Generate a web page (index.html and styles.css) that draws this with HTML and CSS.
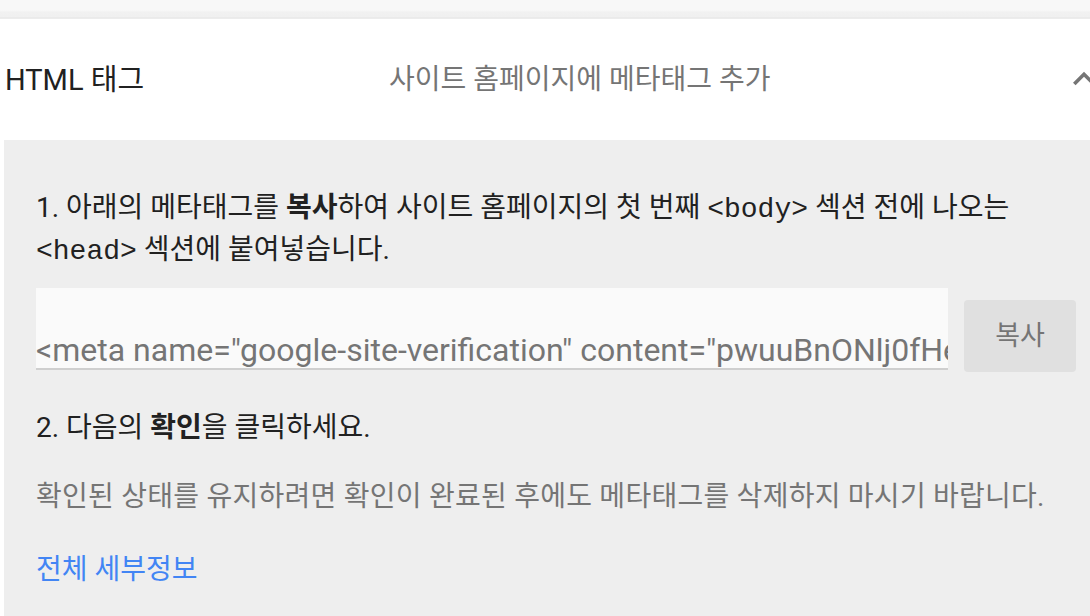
FILE: index.html
```html
<!DOCTYPE html>
<html lang="ko">
<head>
<meta charset="utf-8">
<title>HTML 태그</title>
<link rel="stylesheet" href="styles.css">
</head>
<body>
<div class="page">
  <div class="topstrip"></div>
  <div class="card">
    <div class="card-header">
      <div class="card-title">HTML 태그</div>
      <div class="card-subtitle">사이트 홈페이지에 메타태그 추가</div>
      <svg class="chevron" viewBox="0 0 24 24" width="44" height="44" aria-hidden="true"><path d="M12 8l-6 6 1.41 1.41L12 10.83l4.59 4.58L18 14z" fill="#757575"/></svg>
    </div>
    <div class="panel">
      <p class="step">1. 아래의 메타태그를 <b>복사</b>하여 사이트 홈페이지의 첫 번째 <code>&lt;body&gt;</code> 섹션 전에 나오는 <code>&lt;head&gt;</code> 섹션에 붙여넣습니다.</p>
      <div class="field-row">
        <div class="meta-field">&lt;meta name="google-site-verification" content="pwuuBnONlj0fHe3xQm7dK2vYtL9sRa1cZpW4bUoE8gN" /&gt;</div>
        <button class="copy-btn" type="button">복사</button>
      </div>
      <p class="step step2">2. 다음의 <b>확인</b>을 클릭하세요.</p>
      <p class="note">확인된 상태를 유지하려면 확인이 완료된 후에도 메타태그를 삭제하지 마시기 바랍니다.</p>
      <a class="details-link" href="#">전체 세부정보</a>
    </div>
  </div>
</div>
</body>
</html>
```

FILE: styles.css
```css
html, body {
  margin: 0;
  padding: 0;
  overflow: hidden;
  background: #ffffff;
}

body {
  font-family: Roboto, "Noto Sans CJK KR", sans-serif;
  color: #212121;
}

.page {
  width: 1108px;
}

.topstrip {
  height: 19px;
  background: linear-gradient(to bottom, #f8f8f8 0, #f8f8f8 10px, #f1f1f1 12px, #f0f0f0 17px, #e4e4e4 18px, #f4f4f4 19px);
}

.card {
  background: #ffffff;
}

.card-header {
  height: 121px;
  display: flex;
  align-items: center;
  padding: 0 2px 0 5px;
}

.card-title {
  width: 384px;
  font-size: 29px;
  line-height: 36px;
  color: #212121;
}

.card-subtitle {
  flex: 1;
  font-size: 28px;
  line-height: 36px;
  color: #757575;
}

.chevron {
  display: block;
  flex: none;
  margin-top: -2px;
}

.panel {
  margin-left: 4px;
  background: #eeeeee;
  padding: 47px 32px 40px 32px;
  min-height: 480px;
}

.step {
  margin: 0;
  font-size: 28px;
  line-height: 42px;
  color: #212121;
}

.step b {
  font-weight: 700;
}

.step code {
  font-family: "Liberation Mono", "Courier New", monospace;
  font-size: 28px;
  line-height: 1;
}

.field-row {
  display: flex;
  align-items: flex-start;
  margin-top: 17px;
}

.meta-field {
  width: 912px;
  height: 82px;
  box-sizing: border-box;
  padding-top: 44px;
  background: #fafafa;
  border-bottom: 2px solid #cfcfcf;
  font-size: 32px;
  line-height: 36px;
  color: #757575;
  white-space: nowrap;
  overflow: hidden;
}

.copy-btn {
  margin: 12px 0 0 16px;
  width: 112px;
  height: 72px;
  border: none;
  border-radius: 4px;
  background: #e0e0e0;
  font-family: Roboto, "Noto Sans CJK KR", sans-serif;
  font-size: 27px;
  line-height: 32px;
  color: #757575;
  padding: 0;
}

.step2 {
  margin-top: 35px;
}

.note {
  margin: 27px 0 0 0;
  font-size: 28px;
  line-height: 42px;
  color: #757575;
  letter-spacing: 0.25px;
}

.details-link {
  display: inline-block;
  margin-top: 31px;
  font-size: 28px;
  line-height: 42px;
  color: #4285f4;
  text-decoration: none;
}
```
